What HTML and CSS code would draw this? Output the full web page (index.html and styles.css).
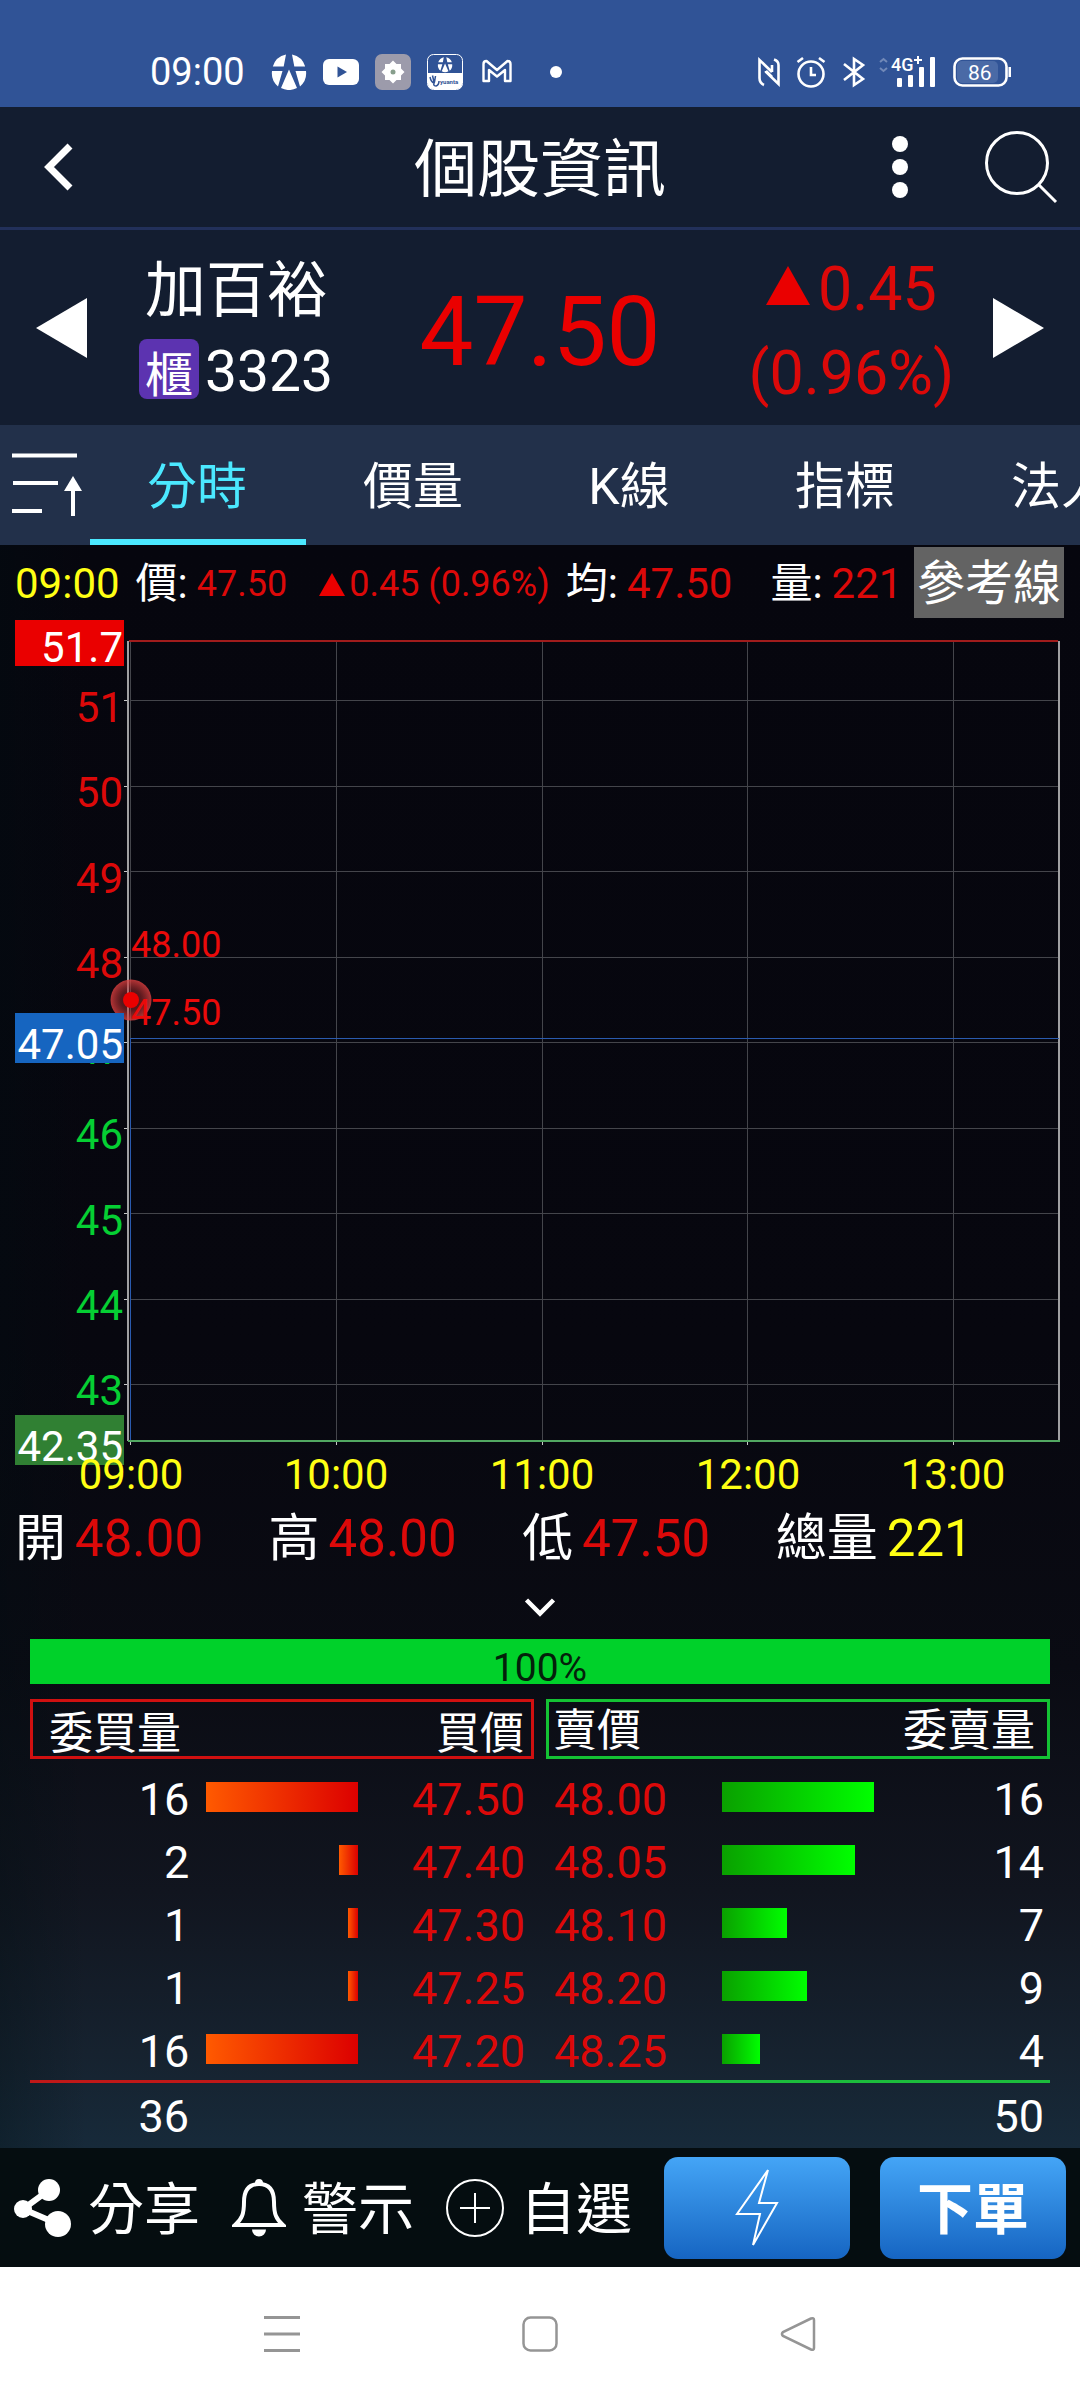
FILE: index.html
```html
<!DOCTYPE html>
<html lang="zh-Hant">
<head>
<meta charset="utf-8">
<meta name="viewport" content="width=device-width, initial-scale=1">
<title>個股資訊</title>
<link rel="stylesheet" href="styles.css">
</head>
<body>
<div class="app">
  <div class="status">
    <span class="status-time">09:00</span>
    <div class="status-notes">
      <svg width="36" height="36" viewBox="0 0 36 36" fill="#fff"><path d="M15 0.5 12.7 12.5H1.8A17.5 17.5 0 0 1 15 .5zM21 .5 23.3 12.5H34.2A17.5 17.5 0 0 0 21 .5zM1 17H11.5L7 32.5A17.5 17.5 0 0 1 1 17zM35 17H24.500L29 32.500A17.5 17.500 0 0 0 35 17zM18 15.500 26 34A17.500 17.500 0 0 1 10 34z"/></svg>
      <svg width="36" height="36" viewBox="0 0 36 36"><rect y="5" width="36" height="26" rx="6" fill="#fff"/><path d="M14.500 12.500 24 18 14.500 23.500z" fill="#305396"/></svg>
      <svg width="36" height="36" viewBox="0 0 36 36"><rect width="36" height="36" rx="7" fill="#9c9bab"/><path d="M18 6.500 21.500 10H26V14.500L29.500 18 26 21.500V26H21.500L18 29.500 14.500 26H10V21.500L6.500 18 10 14.500V10H14.500z" fill="#fff"/><circle cx="18" cy="18" r="2.500" fill="#879e8c"/></svg>
      <svg width="36" height="36" viewBox="0 0 36 36"><rect x=".5" y=".5" width="35" height="35" rx="6" fill="none" stroke="#fff"/><path d="M1 19H35V30Q35 35 30 35H6Q1 35 1 30z" fill="#fff"/><g fill="#fff" transform="translate(10.500 3) scale(.42)"><path d="M15 .5 12.700 12.500H1.800A17.500 17.500 0 0 1 15 .5zM21 .5 23.300 12.500H34.200A17.500 17.500 0 0 0 21 .5zM1 17H11.500L7 32.500A17.500 17.500 0 0 1 1 17zM35 17H24.500L29 32.500A17.500 17.500 0 0 0 35 17zM18 15.500 26 34A17.500 17.500 0 0 1 10 34z"/></g><path d="M3 23Q4 28 7 29M5.500 21.500 7 28M8.500 22 7.500 28Q5.500 32 9 32 12 31 12 27" fill="none" stroke="#305396" stroke-width="1.500"/><text x="13" y="30" font-size="6" font-weight="700" fill="#305396">yuanta</text></svg>
      <svg width="36" height="36" viewBox="0 0 36 36"><path d="M4.500 27V10Q4.500 7 7.500 7L18 16 28.500 7Q31.500 7 31.500 10V27H26V16L18 22.500 10 16V27z" fill="none" stroke="#fff" stroke-width="2.400" stroke-linejoin="round"/></svg>
      <svg width="50" height="36" viewBox="0 0 50 36"><circle cx="25" cy="18" r="6" fill="#fff"/></svg>
    </div>
    <div class="status-system">
      <svg width="22" height="30" viewBox="0 0 22 30" fill="none" stroke="#fff" stroke-width="2.600"><path d="M6 28Q1.500 26 1.500 21V3L14 15M8 14V15L20.500 27V8Q20.500 4 16 2.500M8 14 14 20M14 15V8"/></svg>
      <svg width="30" height="32" viewBox="0 0 30 32" fill="none" stroke="#fff" stroke-width="2.600"><circle cx="15" cy="18" r="12.500"/><path d="M15 11V19H20M1.500 6 7 2M28.500 6 23 2"/></svg>
      <svg width="24" height="32" viewBox="0 0 24 32" fill="none" stroke="#fff" stroke-width="2.600"><path d="M2 8 21 23 12 29V3L21 9 2 24"/></svg>
      <svg class="signal" width="58" height="36" viewBox="0 -4 58 36"><path d="M1 6 4.500 3 8 6M1 12 4.500 15 8 12" fill="none" stroke="#7189b8" stroke-width="2"/><text x="12" y="15" font-size="18" font-weight="500" fill="#fff">4G</text><path d="M35 4H43M39 0V8" stroke="#fff" stroke-width="2"/><g fill="#fff"><rect x="18" y="22" width="5" height="9" rx="1"/><rect x="29" y="19" width="5" height="12" rx="1"/><rect x="40" y="11" width="5" height="20" rx="1"/><rect x="51" y="1" width="5" height="30" rx="1"/></g></svg>
      <svg width="58" height="30" viewBox="0 0 58 30"><rect x="1.500" y="1.500" width="52" height="27" rx="8" fill="none" stroke="#fff" stroke-width="2.600"/><rect x="4" y="4" width="41" height="22" rx="5" fill="#4a6aa6"/><rect x="55.500" y="10" width="2.500" height="10" fill="#fff"/><text x="15" y="23" font-size="21" fill="#fff">86</text></svg>
    </div>
  </div>

  <header class="header">
    <button class="icon-btn back" aria-label="返回"><svg width="30" height="48" viewBox="0 0 30 48"><path d="M26 3 5 24 26 45" fill="none" stroke="#fff" stroke-width="7"/></svg></button>
    <h1 class="title">個股資訊</h1>
    <div class="header-actions">
      <button class="icon-btn" aria-label="更多"><svg width="18" height="64" viewBox="0 0 18 64" fill="#fff"><circle cx="9" cy="9" r="8"/><circle cx="9" cy="32" r="8"/><circle cx="9" cy="55" r="8"/></svg></button>
      <button class="icon-btn" aria-label="搜尋"><svg width="74" height="74" viewBox="0 0 74 74" fill="none" stroke="#fff" stroke-width="3"><circle cx="33" cy="33" r="30.500"/><path d="M54 54 72 72"/></svg></button>
    </div>
  </header>

  <section class="quote">
    <button class="icon-btn" aria-label="上一檔"><svg width="52" height="60" viewBox="0 0 52 60"><path d="M0 30 51 0V60z" fill="#fff"/></svg></button>
    <div class="quote-name">
      <div class="name">加百裕</div>
      <div class="code"><span class="badge">櫃</span>3323</div>
    </div>
    <div class="quote-price">47.50</div>
    <div class="quote-change">
      <div class="change-line"><svg width="44" height="40" viewBox="0 0 44 40"><path d="M22 0 44 39H0z" fill="#ea0000"/></svg>0.45</div>
      <div class="change-line">(0.96%)</div>
    </div>
    <button class="icon-btn" aria-label="下一檔"><svg width="52" height="60" viewBox="0 0 52 60"><path d="M52 30 1 0V60z" fill="#fff"/></svg></button>
  </section>

  <nav class="tabs">
    <button class="icon-btn sort" aria-label="排序"><svg width="74" height="68" viewBox="0 0 74 68"><path d="M1 4.500H66M2 32H47M1 60H31M62 36V65" stroke="#fff" stroke-width="4" fill="none"/><path d="M62 25 71 40H53z" fill="#fff"/></svg></button>
    <a class="tab active" href="#time">分時</a>
    <a class="tab" href="#volume">價量</a>
    <a class="tab" href="#k">K線</a>
    <a class="tab" href="#index">指標</a>
    <a class="tab" href="#legal">法人</a>
  </nav>

  <main class="content">
    <div class="info">
      <span class="info-time">09:00</span>
      <span class="pair price"><span>價:</span><b class="small">47.50</b></span>
      <span class="delta"><svg width="26" height="23" viewBox="0 0 26 23"><path d="M13 0 26 23H0z" fill="#ea0000"/></svg>0.45 (0.96%)</span>
      <span class="pair avg"><span>均:</span><b>47.50</b></span>
      <span class="pair vol"><span>量:</span><b>221</b></span>
      <button class="ref-btn">參考線</button>
    </div>

    <svg class="chart" viewBox="0 620 1080 880" role="img" aria-label="分時走勢圖">
      <defs>
        <radialGradient id="halo"><stop offset="0" stop-color="#e03030" stop-opacity=".25"/><stop offset=".5" stop-color="#c03030" stop-opacity=".45"/><stop offset="1" stop-color="#e04040" stop-opacity=".8"/></radialGradient>
      </defs>
      <path class="grid" d="M130 700.500H1059M130 786.500H1059M130 871.500H1059M130 957.500H1059M130 1042.500H1059M130 1128.500H1059M130 1213.500H1059M130 1299.500H1059M130 1384.500H1059M130.500 641V1441M336.500 641V1441M542.500 641V1441M747.500 641V1441M953.500 641V1441"/>
      <path class="tick" d="M124 700.500H128M124 786.500H128M124 871.500H128M124 957.500H128M124 1042.500H128M124 1128.500H128M124 1213.500H128M124 1299.500H128M124 1384.500H128M130.500 1442V1445M336.500 1442V1445M542.500 1442V1445M747.500 1442V1445M953.500 1442V1445"/>
      <path class="axis" d="M128 641V1441M1059 641V1441"/>
      <path d="M129 641H1058" stroke="#a01c1c" stroke-width="2"/>
      <path d="M128 1441H1060" stroke="#52a862" stroke-width="2"/>
      <path d="M130 1038.500H1059M130.500 1038V1440" stroke="#2a5aae" fill="none"/>
      <g class="label" text-anchor="end">
        <g fill="#dc0909">
          <text x="123" y="722">51</text><text x="123" y="807">50</text><text x="123" y="893">49</text><text x="123" y="978">48</text>
        </g>
        <g fill="#05cf33">
          <text x="123" y="1064">47</text><text x="123" y="1149">46</text><text x="123" y="1235">45</text><text x="123" y="1320">44</text><text x="123" y="1405">43</text>
        </g>
        <rect x="15" y="620" width="109" height="46" fill="#ea0000"/>
        <circle cx="131" cy="1000" r="20.500" fill="url(#halo)"/>
        <rect x="15" y="1013" width="109" height="50" fill="#1665c0"/>
        <rect x="15" y="1415" width="109" height="50" fill="#308033"/>
        <g fill="#fff"><text x="123" y="662">51.7</text><text x="123" y="1059">47.05</text><text x="123" y="1461">42.35</text></g>
      </g>
      <g class="label-small" fill="#ea0a0a"><text x="131" y="957">48.00</text><text x="131" y="1025">47.50</text></g>
      <circle cx="131" cy="1000" r="8" fill="#ea0000"/>
      <g class="label" text-anchor="middle" fill="#ffff14"><text x="131" y="1489">09:00</text><text x="336" y="1489">10:00</text><text x="542" y="1489">11:00</text><text x="748" y="1489">12:00</text><text x="953" y="1489">13:00</text></g>
    </svg>

    <div class="ohlc">
      <div class="stat">開<b>48.00</b></div>
      <div class="stat">高<b>48.00</b></div>
      <div class="stat">低<b>47.50</b></div>
      <div class="stat">總量<b class="yellow">221</b></div>
    </div>
    <button class="expand" aria-label="展開"><svg width="32" height="20" viewBox="0 0 32 20"><path d="M2.500 3 16 16.500 29.500 3" fill="none" stroke="#fff" stroke-width="4.500"/></svg></button>

    <div class="ratio">100%</div>

    <div class="book">
      <table class="side bid">
        <colgroup><col class="c-qty"><col class="c-bar"><col class="c-price"></colgroup>
        <thead><tr><th>委買量</th><th></th><th>買價</th></tr></thead>
        <tbody>
          <tr><td>16</td><td><div class="bar" style="width:100%"></div></td><td>47.50</td></tr>
          <tr><td>2</td><td><div class="bar" style="width:12.5%"></div></td><td>47.40</td></tr>
          <tr><td>1</td><td><div class="bar" style="width:6.25%"></div></td><td>47.30</td></tr>
          <tr><td>1</td><td><div class="bar" style="width:6.25%"></div></td><td>47.25</td></tr>
          <tr><td>16</td><td><div class="bar" style="width:100%"></div></td><td>47.20</td></tr>
        </tbody>
      </table>
      <table class="side ask">
        <colgroup><col class="c-price"><col class="c-bar"><col class="c-qty"></colgroup>
        <thead><tr><th>賣價</th><th></th><th>委賣量</th></tr></thead>
        <tbody>
          <tr><td>48.00</td><td><div class="bar" style="width:100%"></div></td><td>16</td></tr>
          <tr><td>48.05</td><td><div class="bar" style="width:87.5%"></div></td><td>14</td></tr>
          <tr><td>48.10</td><td><div class="bar" style="width:43%"></div></td><td>7</td></tr>
          <tr><td>48.20</td><td><div class="bar" style="width:56%"></div></td><td>9</td></tr>
          <tr><td>48.25</td><td><div class="bar" style="width:25%"></div></td><td>4</td></tr>
        </tbody>
      </table>
    </div>
    <div class="totals"><div class="total-bid"><span>36</span></div><div class="total-ask">50</div></div>
  </main>

  <footer class="actions">
    <button class="action"><svg width="58" height="60" viewBox="0 0 58 60" fill="#fff"><circle cx="35" cy="12" r="11"/><circle cx="9" cy="31" r="9"/><circle cx="44" cy="46" r="13"/><path d="M35 12 9 31 44 46" fill="none" stroke="#fff" stroke-width="6"/></svg><span>分享</span></button>
    <button class="action"><svg width="54" height="60" viewBox="0 0 54 60"><path d="M27 6C15 6 12 15 12 24 12 36 10 41 3 47H51C44 41 42 36 42 24 42 15 39 6 27 6z" fill="none" stroke="#fff" stroke-width="4"/><path d="M23 6V5A4 4 0 0 1 31 5V6zM20 51.500H34A7 7 0 0 1 20 51.500z" fill="#fff"/></svg><span>警示</span></button>
    <button class="action"><svg width="58" height="60" viewBox="0 0 58 60" fill="none" stroke="#fff" stroke-width="2"><circle cx="29" cy="30" r="28"/><path d="M29 15V45M14 30H44"/></svg><span>自選</span></button>
    <button class="order" aria-label="閃電下單"><svg width="46" height="82" viewBox="0 0 46 82"><path d="M34 3 25 36H43L19 78 26 47H3z" fill="none" stroke="#fff" stroke-width="2"/></svg></button>
    <button class="order"><span>下單</span></button>
  </footer>

  <nav class="sysnav">
    <button class="icon-btn" aria-label="最近"><svg width="36" height="36" viewBox="0 0 36 36"><path d="M0 1.500H36M0 18H36M0 34.500H36" stroke="#959595" stroke-width="3"/></svg></button>
    <button class="icon-btn" aria-label="主畫面"><svg width="36" height="36" viewBox="0 0 36 36"><rect x="1.500" y="1.500" width="33" height="33" rx="7" fill="none" stroke="#959595" stroke-width="2.500"/></svg></button>
    <button class="icon-btn" aria-label="上一頁"><svg width="36" height="36" viewBox="0 0 36 36"><path d="M31 2.500 3 16Q1 18 3 20L31 33.500Q34 34.500 34 32V4Q34 1.500 31 2.500z" fill="none" stroke="#959595" stroke-width="2.500"/></svg></button>
  </nav>
</div>
</body>
</html>
```
FILE: styles.css
```css
* { box-sizing: border-box; }

body {
  margin: 0;
  background: #fff;
  color: #fff;
  font-family: Roboto, "Noto Sans CJK TC", sans-serif;
}

button {
  margin: 0;
  padding: 0;
  border: 0;
  background: none;
  color: inherit;
  font: inherit;
}

b { font-weight: 400; }
svg { display: block; flex: none; }
.icon-btn { display: flex; flex: none; }

.app {
  display: flex;
  flex-direction: column;
  overflow: hidden;
}

/* system status bar */
.status {
  display: flex;
  align-items: center;
  height: 107px;
  padding: 37px 69px 0 150px;
  background: #305396;
}
.status-time { font-size: 38px; line-height: 40px; margin-right: 26px; }
.status-notes { display: flex; gap: 16px; }
.status-system { display: flex; align-items: center; gap: 16px; margin-left: auto; }
.signal { margin: -4px 0 0 -3px; }

/* title bar */
.header {
  display: grid;
  grid-template-columns: 1fr auto 1fr;
  align-items: center;
  height: 123px;
  padding: 0 22px;
  background: #131d30;
  border-bottom: 3px solid #22305a;
}
.back { padding-left: 22px; }
.title { margin: 0; padding-top: 6px; font-size: 63px; line-height: 80px; font-weight: 400; }
.header-actions { display: flex; align-items: center; justify-content: flex-end; gap: 75px; }

/* quote summary */
.quote {
  display: grid;
  grid-template-columns: 52px 14fr 17fr 14fr 52px;
  align-items: center;
  height: 195px;
  padding: 0 36px;
  background: #131d30;
}
.quote-name { padding: 6px 0 0 51px; white-space: nowrap; }
.name { padding-left: 6px; font-size: 61px; line-height: 82px; }
.code { display: flex; align-items: center; gap: 6px; font-size: 57px; line-height: 80px; }
.badge {
  height: 60px;
  margin-top: -6px;
  padding: 7px 6px 0;
  border-radius: 8px;
  background: #5c33b0;
  font-size: 48px;
  line-height: 60px;
}
.quote-price { padding-top: 8px; color: #ea0000; font-size: 96px; line-height: 112px; text-align: center; }
.quote-change { padding-top: 6px; color: #dc0909; font-size: 61px; line-height: 84px; text-align: center; white-space: nowrap; }
.change-line { display: flex; align-items: center; justify-content: center; gap: 8px; }
.change-line svg { margin-top: -6px; }

/* tabs */
.tabs { display: flex; height: 120px; background: #22304a; }
.sort { width: 90px; align-items: center; padding-left: 11px; }
.tab {
  flex: 0 0 216px;
  padding: 5px 2px 0 0;
  color: #fff;
  font-size: 50px;
  line-height: 115px;
  text-align: center;
  text-decoration: none;
}
.tab.active { color: #4be8ff; box-shadow: inset 0 -6px #4be8ff; }

/* chart area */
.content {
  background:
    linear-gradient(90deg, rgba(0, 14, 18, .3), transparent 8%),
    linear-gradient(#06060e, #07070f 50%, #0a0b13 70%, #11151f 84%, #16222f 94%, #172a3a);
}
.info {
  display: flex;
  align-items: center;
  height: 75px;
  padding: 0 16px 0 15px;
  font-size: 42px;
  line-height: 50px;
  white-space: nowrap;
}
.info > span { padding-top: 3px; }
.info b, .delta { color: #dc0909; }
.info-time { color: #ffff14; }
.pair { display: flex; align-items: center; gap: 9px; }
.price { margin-left: 16px; }
.small, .delta { font-size: 36px; }
.delta { display: flex; align-items: center; gap: 4px; margin-left: 32px; }
.avg { margin-left: 16px; }
.vol { margin-left: 38px; }
.ref-btn {
  height: 71px;
  margin-left: auto;
  padding: 3px 3px 0;
  background: #636363;
  font-size: 48px;
}

.chart { width: 100%; height: auto; font-family: Roboto, sans-serif; }
.grid { fill: none; stroke: #44454b; }
.tick { fill: none; stroke: #c8c8c8; }
.axis { fill: none; stroke: #a0a0a2; stroke-width: 2; }
.label { font-size: 42px; }
.label-small { font-size: 36px; }

.ohlc {
  display: grid;
  grid-template-columns: 5fr 5fr 5fr 6fr;
  padding: 3px 0 0 15px;
  font-size: 51px;
  line-height: 72px;
}
.stat { display: flex; align-items: center; gap: 9px; white-space: nowrap; }
.stat b { color: #dc0909; }
.stat .yellow { color: #ffff14; }
.expand { display: flex; align-items: center; justify-content: center; width: 100%; height: 64px; }

/* order book */
.ratio {
  height: 45px;
  margin: 0 30px;
  padding-top: 7px;
  background: #00d12a;
  color: #04200a;
  font-size: 39px;
  line-height: 44px;
  text-align: center;
}
.book {
  display: grid;
  grid-template-columns: 1fr 1fr;
  gap: 12px;
  margin: 15px 30px 0;
}
.side { width: 100%; border-collapse: separate; border-spacing: 0; table-layout: fixed; font-size: 45px; line-height: 50px; }
.c-qty { width: 35%; }
.c-bar { width: 30%; }
.side th {
  height: 60px;
  padding: 4px 0 0;
  border: solid;
  border-width: 3px 0;
  font-size: 44px;
  line-height: 50px;
  font-weight: 400;
  white-space: nowrap;
}
.side th:first-child { border-left-width: 3px; text-align: left; }
.side th:last-child { border-right-width: 3px; text-align: right; }
.side td { height: 63px; padding: 7px 0 0; }
.side tbody tr:first-child td { height: 69px; padding-top: 13px; }
.bar { height: 30px; margin-bottom: 6px; }

.bid th { padding-top: 10px; border-color: #d01010; line-height: 44px; }
.bid th:first-child { padding-left: 16px; }
.bid th:last-child { padding-right: 7px; }
.bid td { text-align: right; }
.bid td:first-child { padding-right: 17px; }
.bid td:last-child { padding-right: 9px; color: #dc0909; }
.bid .bar { margin-left: auto; background: linear-gradient(90deg, #ff5a00, #dc0000); }

.ask th { border-color: #14c234; }
.ask th:first-child { padding-left: 4px; }
.ask th:last-child { padding-right: 12px; }
.ask td:first-child { padding-left: 8px; color: #dc0909; }
.ask td:last-child { padding-right: 6px; text-align: right; }
.ask .bar { background: linear-gradient(90deg, #0aa000, #00ff00); }

.totals {
  display: grid;
  grid-template-columns: 1fr 1fr;
  margin: 0 30px;
  font-size: 45px;
  line-height: 63px;
  text-align: right;
}
.total-bid, .total-ask { height: 68px; padding-top: 2px; }
.total-bid { display: flex; border-top: 3px solid #c01818; }
.total-bid span { width: 159px; }
.total-ask { padding-right: 6px; border-top: 3px solid #1cbc3c; }

/* action bar */
.actions {
  display: flex;
  align-items: center;
  height: 119px;
  padding: 0 16px 0 14px;
  background: #050d10;
  font-size: 56px;
  line-height: 80px;
  white-space: nowrap;
}
.action { display: flex; align-items: center; gap: 16px; margin-right: 32px; }
.action span, .order span { padding-top: 5px; }
.order {
  display: flex;
  flex: 0 0 186px;
  align-items: center;
  justify-content: center;
  height: 102px;
  border-radius: 14px;
  background: linear-gradient(#44a5f6, #1665c2);
  font-weight: 700;
}
.order:last-child { margin-left: 30px; }
.action + .order { margin-left: auto; }

/* system navigation */
.sysnav {
  display: grid;
  grid-template-columns: repeat(3, 1fr);
  align-self: center;
  justify-items: center;
  align-items: center;
  width: 100%;
  max-width: 774px;
  height: 133px;
}
```
